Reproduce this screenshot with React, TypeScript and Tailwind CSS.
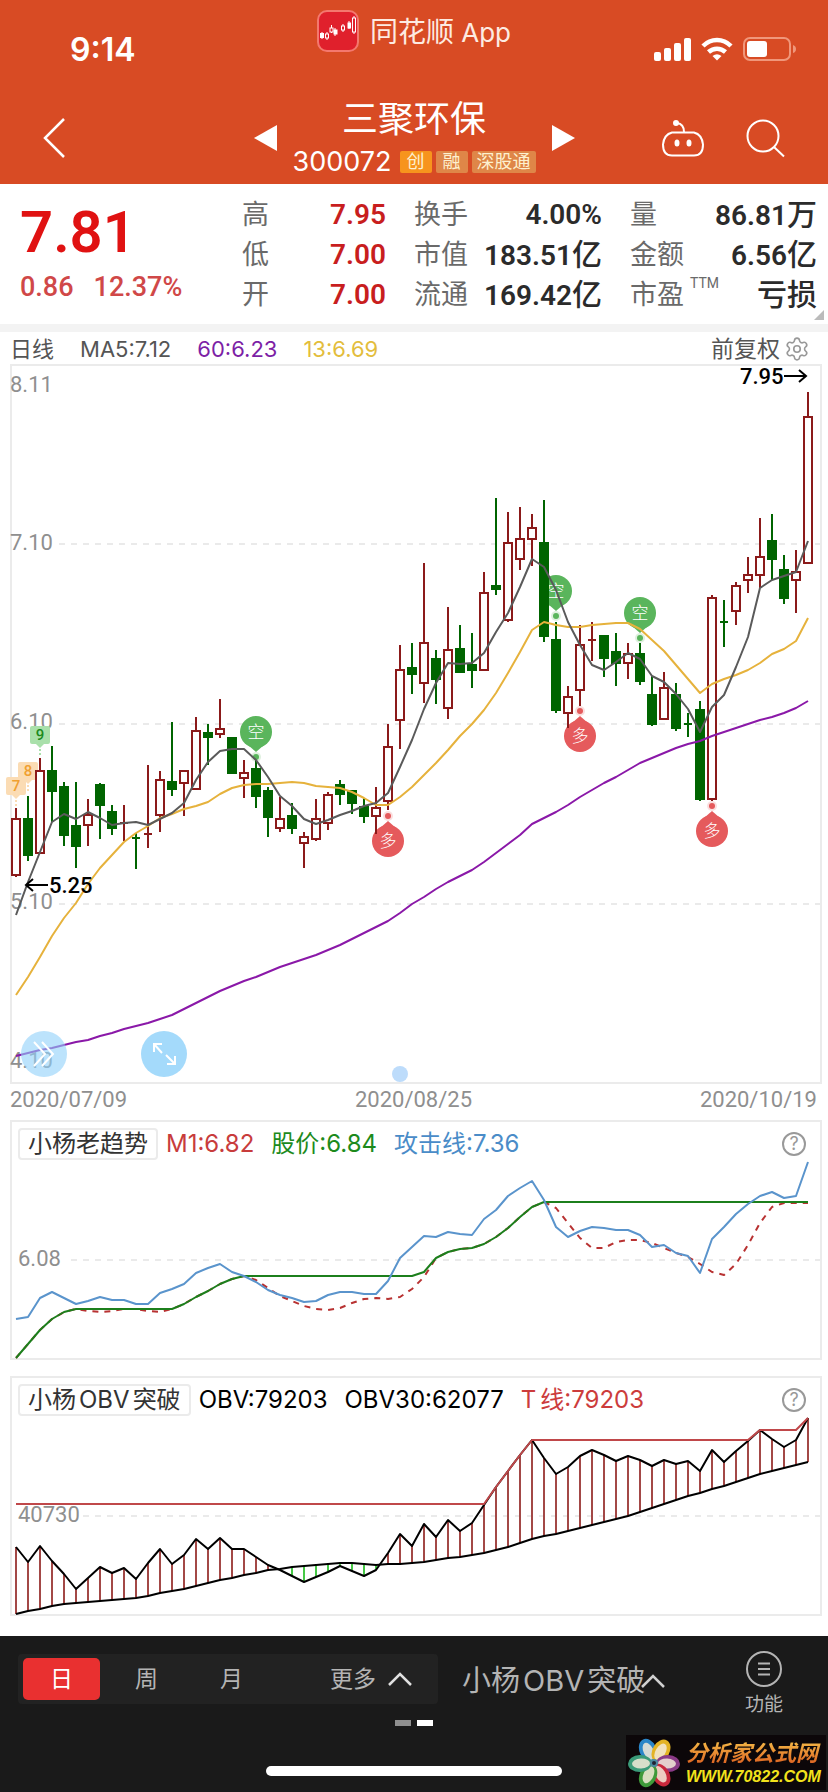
import React, { useState } from 'react';
import { Settings } from 'lucide-react';

const UI_FONT = "font-[family-name:Inter,'Noto_Sans_CJK_SC',sans-serif]";
const NUM_FONT = "font-[family-name:Roboto,'Noto_Sans_CJK_SC',sans-serif]";

// [up ? 1 : 0, bodyTop, bodyBottom, high, low]
const candles = [
    [1, 819, 875, 808, 877], [0, 818, 856, 796, 861], [1, 771, 853, 758, 854], [0, 770, 792, 746, 822],
    [0, 786, 836, 782, 846], [0, 825, 847, 782, 868], [1, 815, 825, 799, 846], [0, 784, 806, 783, 839],
    [0, 811, 829, 805, 835], [1, 823, 823, 805, 841], [0, 838, 838, 833, 869], [1, 834, 834, 765, 848],
    [1, 780, 815, 771, 832], [0, 781, 790, 722, 796], [1, 771, 783, 770, 816], [1, 731, 789, 717, 790],
    [0, 732, 738, 724, 765], [1, 729, 734, 699, 738], [0, 737, 774, 737, 774], [1, 773, 778, 760, 798],
    [0, 768, 797, 760, 808], [0, 790, 818, 787, 837], [1, 819, 828, 797, 832], [0, 815, 829, 803, 834],
    [1, 837, 843, 832, 868], [1, 819, 839, 799, 841], [1, 795, 823, 792, 830], [0, 784, 795, 780, 805],
    [0, 790, 804, 790, 814], [0, 806, 817, 798, 823], [1, 808, 816, 787, 834], [1, 747, 801, 724, 810],
    [1, 670, 720, 645, 749], [0, 667, 675, 643, 694], [1, 643, 683, 563, 703], [0, 658, 680, 650, 704],
    [1, 650, 708, 607, 719], [0, 648, 673, 625, 673], [0, 664, 671, 633, 688], [1, 593, 670, 572, 671],
    [0, 585, 590, 498, 595], [1, 543, 620, 512, 622], [1, 539, 559, 507, 570], [1, 528, 539, 514, 566],
    [0, 542, 637, 500, 642], [0, 639, 711, 622, 713], [1, 697, 713, 686, 728], [1, 645, 690, 625, 706],
    [1, 640, 640, 622, 661], [0, 635, 659, 635, 677], [0, 651, 664, 633, 686], [1, 654, 663, 643, 679],
    [0, 653, 682, 643, 685], [0, 694, 725, 676, 726], [1, 688, 719, 672, 719], [0, 694, 729, 683, 731],
    [0, 724, 724, 713, 737], [0, 709, 800, 701, 801], [1, 598, 799, 595, 801], [0, 622, 622, 600, 647],
    [1, 586, 611, 582, 625], [1, 575, 580, 557, 593], [1, 557, 575, 518, 588], [0, 540, 560, 514, 580],
    [0, 569, 599, 555, 604], [1, 572, 580, 550, 613], [1, 417, 563, 392, 563],
];

const ma5 = [
    915, 882, 852, 822, 814, 819, 812, 818, 825, 823, 822, 825, 819, 813, 803, 780, 762, 751, 749, 749, 760, 777,
    796, 806, 819, 824, 820, 815, 811, 806, 803, 793, 767, 740, 709, 683, 663, 664, 663, 653, 632, 613, 587, 559,
    567, 590, 622, 645, 665, 670, 662, 653, 659, 676, 682, 694, 709, 732, 707, 695, 667, 637, 588, 580, 576, 572, 541,
];

const ma13 = [
    995, 977, 957, 936, 918, 903, 884, 868, 855, 842, 833, 826, 818, 814, 809, 806, 802, 794, 788, 785, 784, 784,
    783, 782, 783, 786, 787, 788, 792, 798, 805, 805, 797, 787, 775, 763, 750, 736, 724, 710, 693, 673, 652, 630,
    622, 625, 627, 627, 625, 624, 623, 623, 629, 640, 651, 665, 679, 693, 684, 679, 675, 670, 663, 654, 649, 641, 618,
];

const ma60 = [
    1056, 1053, 1050, 1048, 1045, 1042, 1040, 1036, 1033, 1029, 1026, 1023, 1019, 1015, 1009, 1003, 997, 991, 986,
    981, 977, 972, 967, 963, 959, 955, 950, 945, 939, 933, 927, 921, 913, 904, 897, 889, 882, 876, 870, 862, 853,
    844, 835, 824, 818, 812, 805, 797, 790, 783, 777, 770, 763, 758, 753, 748, 744, 741, 736, 732, 728, 724, 720,
    717, 713, 708, 701,
];

const attack = [
    1319, 1317, 1298, 1292, 1298, 1304, 1301, 1297, 1300, 1300, 1304, 1304, 1293, 1289, 1284, 1273, 1268, 1264,
    1272, 1276, 1282, 1290, 1295, 1298, 1302, 1301, 1295, 1292, 1292, 1294, 1294, 1281, 1258, 1247, 1236, 1237,
    1232, 1234, 1235, 1219, 1210, 1196, 1188, 1181, 1200, 1227, 1237, 1231, 1227, 1228, 1230, 1230, 1235, 1247,
    1245, 1253, 1256, 1273, 1239, 1227, 1214, 1204, 1196, 1192, 1198, 1196, 1162,
];

const price = [
    1358, 1344, 1330, 1319, 1312, 1309, 1309, 1309, 1309, 1309, 1309, 1309, 1309, 1309, 1304, 1297, 1291, 1284,
    1279, 1276, 1276, 1276, 1276, 1276, 1276, 1276, 1276, 1276, 1276, 1276, 1276, 1276, 1276, 1276, 1272, 1258,
    1252, 1249, 1248, 1244, 1237, 1228, 1217, 1207, 1202, 1202, 1202, 1202, 1202, 1202, 1202, 1202, 1202, 1202,
    1202, 1202, 1202, 1202, 1202, 1202, 1202, 1202, 1202, 1202, 1202, 1202, 1202,
];

const m1 = [
    1358, 1344, 1330, 1319, 1312, 1309, 1311, 1312, 1311, 1309, 1309, 1311, 1312, 1309, 1304, 1297, 1291, 1284,
    1279, 1276, 1280, 1288, 1296, 1301, 1306, 1309, 1310, 1308, 1303, 1299, 1298, 1299, 1297, 1289, 1277, 1258,
    1252, 1249, 1248, 1244, 1237, 1228, 1217, 1207, 1202, 1208, 1223, 1238, 1248, 1248, 1242, 1240, 1240, 1243,
    1248, 1253, 1257, 1264, 1272, 1275, 1264, 1245, 1223, 1207, 1203, 1203, 1203,
];

const obv = [
    1547, 1562, 1546, 1561, 1574, 1589, 1578, 1567, 1573, 1568, 1579, 1563, 1549, 1564, 1555, 1539, 1549, 1538,
    1549, 1549, 1557, 1565, 1570, 1576, 1582, 1577, 1572, 1566, 1571, 1576, 1570, 1553, 1534, 1546, 1524, 1537,
    1520, 1531, 1523, 1505, 1487, 1471, 1455, 1440, 1458, 1474, 1467, 1456, 1450, 1455, 1461, 1456, 1460, 1466,
    1460, 1464, 1461, 1471, 1450, 1462, 1451, 1441, 1430, 1439, 1447, 1440, 1418,
];

const obv30 = [
    1614, 1611, 1609, 1606, 1604, 1603, 1602, 1601, 1600, 1599, 1598, 1596, 1593, 1591, 1589, 1586, 1583, 1580,
    1578, 1575, 1573, 1570, 1569, 1567, 1566, 1565, 1564, 1563, 1563, 1564, 1565, 1564, 1564, 1563, 1562, 1560,
    1558, 1557, 1555, 1553, 1550, 1547, 1543, 1539, 1536, 1534, 1531, 1528, 1525, 1522, 1519, 1516, 1512, 1508,
    1504, 1500, 1496, 1493, 1489, 1486, 1482, 1478, 1474, 1471, 1468, 1465, 1462,
];

const tLine = '16,1504 484,1504 496,1487 508,1471 520,1455 532,1440 748,1440 760,1430 796,1430 808,1418';

const xAt = (i: number) => 16 + 12 * i;
const toPoints = (ys: number[]) => ys.map((y, i) => `${xAt(i)},${y}`).join(' ');

const Line = ({ points, color, width = 2, dash }: { points: string; color: string; width?: number; dash?: string }) => (
    <polyline points={points} fill="none" stroke={color} strokeWidth={width} strokeDasharray={dash} strokeLinejoin="round" />
);

const GridLine = ({ y, x1 = 59 }: { y: number; x1?: number }) => (
    <line x1={x1} x2={820} y1={y} y2={y} stroke="#e4e4e4" strokeWidth={1.5} strokeDasharray="6 6" />
);

const Candle = ({ data, x }: { data: number[]; x: number }) => {
    const [up, top, bottom, high, low] = data;
    const color = up ? '#8b1a1a' : '#006400';
    if (top === bottom) {
        return <path d={`M${x} ${high}V${low}M${x - 4} ${top}h8`} stroke={color} strokeWidth={2} />;
    }
    return (
        <g stroke={color} strokeWidth={2}>
            <path d={`M${x} ${high}V${top}M${x} ${bottom}V${low}`} />
            {up ? (
                <rect x={x - 4} y={top} width={8} height={bottom - top} fill="#fff" />
            ) : (
                <rect x={x - 4} y={top + 1} width={8} height={Math.max(bottom - top - 2, 1)} fill={color} />
            )}
        </g>
    );
};

// Signal pin: "空" hangs above the price, "多" sits below it
const Pin = ({ x, y, type }: { x: number; y: number; type: 'short' | 'long' }) => {
    const short = type === 'short';
    const color = short ? '#5ab55c' : '#e55a5c';
    const s = short ? 1 : -1;
    return (
        <g>
            <circle cx={x} cy={y} r={16} fill={color} />
            <path d={`M${x - 8} ${y + s * 13}L${x} ${y + s * 20}L${x + 8} ${y + s * 13}Z`} fill={color} />
            <circle cx={x} cy={y + s * 25} r={5} fill={color} opacity={0.2} />
            <circle cx={x} cy={y + s * 25} r={3} fill={color} />
            <text x={x} y={y + 6} textAnchor="middle" fontSize={17} fontWeight={300} fill="#fff">{short ? '空' : '多'}</text>
        </g>
    );
};

const Tag = ({ x, y, label, fill, color }: { x: number; y: number; label: string; fill: string; color: string }) => (
    <g>
        <rect x={x - 10} y={y - 9} width={20} height={18} rx={2} fill={fill} />
        <path d={`M${x - 4} ${y + 9}h8l-4 4z`} fill={fill} />
        <path d={`M${x} ${y + 14}v8`} stroke={fill} strokeWidth={2} strokeDasharray="2 2" />
        <text x={x} y={y + 5} textAnchor="middle" fontSize={15} fontWeight={500} fill={color}>{label}</text>
    </g>
);

const StatusBar = () => (
    <div className="grid h-20 grid-cols-[1fr_auto_1fr]">
        <div className="pt-[30px] pl-[70px] text-[32px] leading-10 font-semibold">9:14</div>
        <div className="flex items-start gap-[11px] pt-2.5">
            <svg className="size-[42px]" viewBox="0 0 42 42">
                <rect x="1" y="1" width="40" height="40" rx="9" fill="#e0202c" stroke="#f4786e" strokeWidth="2" />
                <g fill="#fff" stroke="#fff">
                    <path d="M5 22v7M18 18v8M32 11v8" />
                    <rect x="3.5" y="23.500" width="3" height="4" />
                    <rect x="17" y="20" width="3" height="4" />
                    <rect x="31" y="13" width="2.500" height="5" />
                </g>
                <g fill="none" stroke="#fff">
                    <path d="M10 22v8M14.500 15v8M26 14v8M37 6v18" />
                    <rect x="8.500" y="24" width="3" height="4" fill="#e0202c" />
                    <rect x="13" y="18" width="3" height="4" fill="#e0202c" />
                    <rect x="24.500" y="16" width="3" height="4" fill="#e0202c" />
                    <rect x="35.500" y="8" width="3" height="14" fill="#e0202c" />
                </g>
            </svg>
            <span className="pt-px text-[26px] leading-[42px] text-[#fdebe2]">
                <span className="text-[28px]">同花顺</span> App
            </span>
        </div>
        <div className="flex items-start justify-end gap-2.5 pt-[37px] pr-8">
            <svg className="h-6 w-[37px]" viewBox="0 0 37 24" fill="#fff">
                <rect x="0" y="15" width="7" height="9" rx="2" />
                <rect x="10" y="11" width="7" height="13" rx="2" />
                <rect x="20" y="6" width="7" height="18" rx="2" />
                <rect x="30" y="1" width="7" height="23" rx="2" />
            </svg>
            <svg className="h-6 w-8" viewBox="0 0 32 24" fill="none" stroke="#fff" strokeWidth="4.500">
                <path d="M2 9C10 1 22 1 30 9" />
                <path d="M7.500 15C12.500 10.500 19.500 10.500 24.500 15" />
                <path d="M16 23.500l-4.500-4.500q4.500-3.500 9 0z" fill="#fff" stroke="none" />
            </svg>
            <svg className="h-6 w-[53px]" viewBox="0 0 53 24">
                <rect x="1" y="1" width="46" height="22" rx="6" fill="none" stroke="#f0977b" strokeWidth="2" />
                <rect x="4" y="4" width="20" height="16" rx="3" fill="#fff" />
                <path d="M50 8q3 1 3 4t-3 4z" fill="#f0977b" />
            </svg>
        </div>
    </div>
);

const badges = [
    { label: '创', style: 'bg-[#f7941d]' },
    { label: '融', style: 'bg-[#df8648]' },
    { label: '深股通', style: 'bg-[#df8648]' },
];

const NavHeader = () => (
    <div className="grid h-[104px] grid-cols-[1fr_auto_1fr] items-center">
        <button aria-label="返回" className="ml-[42px] w-6 pt-3">
            <svg className="h-10 w-6" viewBox="0 0 24 40" fill="none" stroke="#fff" strokeWidth="2.500">
                <path d="M22 1L3 20L22 39" />
            </svg>
        </button>
        <div className="flex items-center gap-4">
            <button aria-label="上一只" className="pt-3">
                <svg className="h-[26px] w-[23px]" viewBox="0 0 23 26" fill="#fff"><path d="M23 0v26L0 13z" /></svg>
            </button>
            <div className="pt-2 text-center">
                <h1 className="text-4xl leading-10 font-normal">三聚环保</h1>
                <div className="mt-3 flex h-[22px] items-center gap-1 text-lg leading-[22px]">
                    <span className="mr-1 text-[27px]">300072</span>
                    {badges.map((b) => (
                        <span key={b.label} className={`min-w-8 rounded-xs px-[5px] text-[#fdf0cf] ${b.style}`}>{b.label}</span>
                    ))}
                </div>
            </div>
            <button aria-label="下一只" className="pt-3">
                <svg className="h-[26px] w-[23px]" viewBox="0 0 23 26" fill="#fff"><path d="M0 0v26L23 13z" /></svg>
            </button>
        </div>
        <div className="flex justify-end gap-[42px] pt-3 pr-[42px]">
            <button aria-label="智能助手">
                <svg className="h-10 w-[42px]" viewBox="0 0 42 40" fill="none" stroke="#fff" strokeWidth="2">
                    <path d="M10 14.500h22q8 2 9 12q0 11-9 11H10q-9 0-9-11q1-10 9-12z" />
                    <path d="M22 14q0-8-7-9" />
                    <circle cx="14" cy="5" r="2" fill="#fff" />
                    <ellipse cx="15" cy="25" rx="1.500" ry="2.500" fill="#fff" />
                    <ellipse cx="27" cy="25" rx="1.500" ry="2.500" fill="#fff" />
                </svg>
            </button>
            <button aria-label="搜索">
                <svg className="size-10" viewBox="0 0 40 40" fill="none" stroke="#fff" strokeWidth="2">
                    <circle cx="17" cy="18" r="15.500" />
                    <path d="M28 29L38 38.500" />
                </svg>
            </button>
        </div>
    </div>
);

const quoteColumns = [
    {
        value: 'text-[#c81e1e]',
        rows: [{ label: '高', num: '7.95' }, { label: '低', num: '7.00' }, { label: '开', num: '7.00' }],
    },
    {
        value: 'text-[#2b2b2b]',
        rows: [{ label: '换手', num: '4.00%' }, { label: '市值', num: '183.51', unit: '亿' }, { label: '流通', num: '169.42', unit: '亿' }],
    },
    {
        value: 'text-[#2b2b2b]',
        rows: [{ label: '量', num: '86.81', unit: '万' }, { label: '金额', num: '6.56', unit: '亿' }, { label: '市盈', sup: 'TTM', num: '', unit: '亏损' }],
    },
] as { value: string; rows: { label: string; sup?: string; num: string; unit?: string }[] }[];

const QuotePanel = () => (
    <section className={`relative grid h-[140px] grid-cols-[214px_144fr_188fr_187fr] gap-x-7 bg-white pt-[11px] pr-[11px] ${NUM_FONT}`}>
        <div className="pl-5">
            <div className="mt-2 text-[58px] leading-[58px] font-semibold text-[#e01212]">7.81</div>
            <div className="mt-2.5 flex gap-5 text-[27px] leading-8 font-medium whitespace-nowrap text-[#d04848]">
                <span>0.86</span>
                <span>12.37%</span>
            </div>
        </div>
        {quoteColumns.map((col, i) => (
            <dl key={i}>
                {col.rows.map((row) => (
                    <div key={row.label} className="flex h-10 items-center justify-between whitespace-nowrap">
                        <dt className="flex text-[27px] leading-10 text-[#6a6a6a]">
                            {row.label}
                            {row.sup && <sup className="top-0 ml-1.5 text-sm leading-4">{row.sup}</sup>}
                        </dt>
                        <dd className={`text-[28px] leading-10 font-semibold ${col.value}`}>
                            {row.num}
                            {row.unit && <span className="text-[30px] font-medium">{row.unit}</span>}
                        </dd>
                    </div>
                ))}
            </dl>
        ))}
        <svg className="absolute right-1 bottom-1 size-2.5" viewBox="0 0 10 10"><path d="M10 0v10H0z" fill="#bbb" /></svg>
    </section>
);

const axisLabels = [
    { text: '8.11', y: 392 },
    { text: '7.10', y: 550 },
    { text: '6.10', y: 729 },
    { text: '5.10', y: 909 },
    { text: '4.10', y: 1068 },
];

const KLineChart = () => (
    <section className="relative mr-1.5 ml-2.5 border-2 border-[#ebebeb]">
        <svg className={`block w-full overflow-visible ${NUM_FONT}`} viewBox="12 366 808 716">
            <GridLine y={544} />
            <GridLine y={724} />
            <GridLine y={904} />
            {axisLabels.map((l) => (
                <text key={l.text} x={10} y={l.y} fontSize={22} fill="#8f8f8f">{l.text}</text>
            ))}
            <Tag x={28} y={771} label="8" fill="#fbdcb4" color="#f0a030" />
            <Tag x={16} y={786} label="7" fill="#fbdcb4" color="#f0a030" />
            <Tag x={40} y={735} label="9" fill="#a9e0aa" color="#1c8a1c" />
            <Pin x={256} y={732} type="short" />
            <Pin x={556} y={591} type="short" />
            <Pin x={640} y={613} type="short" />
            <Pin x={388} y={841} type="long" />
            <Pin x={580} y={736} type="long" />
            <Pin x={712} y={831} type="long" />
            {candles.map((c, i) => (
                <Candle key={i} data={c} x={xAt(i)} />
            ))}
            <Line points={toPoints(ma60)} color="#8a18a8" />
            <Line points={toPoints(ma13)} color="#e6b23c" />
            <Line points={toPoints(ma5)} color="#5a5a5a" />
            <g fill="none" stroke="#000" strokeWidth={2}>
                <path d="M784 376h21M799 370l7 6l-7 6" />
                <path d="M48 885h-21M33 879l-7 6l7 6" />
            </g>
            <text x={740} y={384} fontSize={22} fontWeight={500}>7.95</text>
            <text x={49} y={893} fontSize={22} fontWeight={500}>5.25</text>
            <circle cx={400} cy={1074} r={8} fill="#bddcfb" />
        </svg>
        <button aria-label="快进" className="absolute bottom-[5px] left-[9px] size-[46px] rounded-full bg-[#8fd0fa]/60">
            <svg viewBox="0 0 46 46" fill="none" stroke="#fff" strokeWidth="2">
                <path d="M13 11l11 12l-11 12M21 11l11 12l-11 12" />
            </svg>
        </button>
        <button aria-label="全屏" className="absolute bottom-[5px] left-[129px] size-[46px] rounded-full bg-[#a4dafb]">
            <svg viewBox="0 0 46 46" fill="none" stroke="#fff" strokeWidth="2">
                <path d="M13 21v-8h8M13 13l8 9M34 25v8h-8M34 33l-9-9" />
            </svg>
        </button>
    </section>
);

interface Legend {
    text: React.ReactNode;
    style: string;
}

interface IndicatorPanelProps {
    title: React.ReactNode;
    legends: Legend[];
    viewBox: string;
    children: React.ReactNode;
}

const IndicatorPanel = ({ title, legends, viewBox, children }: IndicatorPanelProps) => (
    <section className="mr-1.5 ml-2.5 border-2 border-[#ebebeb]">
        <div className="flex h-[38px] items-center pt-1.5 pr-3.5 pl-[6px] whitespace-nowrap">
            <button className="mr-2 h-8 rounded-sm border-2 border-[#ebebeb] px-2 text-[24px] leading-7 text-[#333]">{title}</button>
            <div className="flex flex-1 gap-[17px] text-[24px] leading-8">
                {legends.map((l, i) => (
                    <span key={i} className={l.style}>{l.text}</span>
                ))}
            </div>
            <button aria-label="说明" className="size-6 rounded-full border-2 border-[#999] text-lg leading-5 text-[#999]">?</button>
        </div>
        <svg className={`block w-full overflow-visible ${NUM_FONT}`} viewBox={viewBox}>{children}</svg>
    </section>
);

const ObvTitle = () => (
    <>小杨<span className="mx-[3px]">OBV</span>突破</>
);

const periods = ['日', '周', '月'];

const BottomBar = () => {
    const [period, setPeriod] = useState('日');

    return (
        <footer className="relative mt-5 h-[156px] bg-[#1a1a1a] pt-[18px] text-[#b4b4b4]">
            <div className="flex h-[50px] items-center pl-[18px]">
                <div className="flex h-[50px] w-[420px] items-center rounded-sm bg-[#222] pl-[5px] text-[23px]">
                    {periods.map((p) => (
                        <button
                            key={p}
                            onClick={() => setPeriod(p)}
                            className={`mr-2 h-[42px] w-[77px] rounded-[5px] ${p === period ? 'bg-[#e93030] text-white' : ''}`}
                        >
                            {p}
                        </button>
                    ))}
                    <button className="ml-auto flex items-center gap-3 pr-[26px]">
                        更多
                        <svg className="h-3.5 w-6" viewBox="0 0 24 14" fill="none" stroke="#e0e0e0" strokeWidth="2.500"><path d="M1 13L12 2L23 13" /></svg>
                    </button>
                </div>
                <button className="ml-6 flex items-center pt-1 text-[29px] whitespace-nowrap">
                    <span><ObvTitle /></span>
                    <svg className="-ml-1 h-3.5 w-6" viewBox="0 0 24 14" fill="none" stroke="#d0d0d0" strokeWidth="2.500"><path d="M1 13L12 2L23 13" /></svg>
                </button>
                <button className="mr-[45px] ml-auto flex flex-col items-center gap-1 pt-3 text-[19px]">
                    <svg className="size-9" viewBox="0 0 36 36" fill="none" stroke="#b4b4b4" strokeWidth="2">
                        <circle cx="18" cy="18" r="17" />
                        <path d="M12 12.500h12M12 18h12M12 23.500h12" />
                    </svg>
                    功能
                </button>
            </div>
            <div className="mt-4 flex justify-center gap-1.5">
                <span className="h-1.5 w-4 bg-[#8f8f8f]" />
                <span className="h-1.5 w-4 bg-white" />
            </div>
            <div className="mx-auto mt-10 h-2.5 w-[296px] rounded-full bg-white" />
            <Watermark />
        </footer>
    );
};

const petals = [
    { angle: -25, color: '#2a86c8' },
    { angle: 30, color: '#e3b324' },
    { angle: 92, color: '#8a3a86' },
    { angle: 150, color: '#c8283c' },
    { angle: 205, color: '#3f9a3a' },
    { angle: 268, color: '#3a9a78' },
];

const Watermark = () => (
    <a href="#" className="absolute right-0.5 bottom-0.5 flex h-[55px] w-[200px] items-center gap-1.5 bg-[#0c0709] pl-0.5">
        <svg className="h-[52px] w-[52px] shrink-0" viewBox="0 0 52 52">
            {petals.map((p) => (
                <g key={p.angle} transform={`rotate(${p.angle} 26 26)`}>
                    <ellipse cx="26" cy="12" rx="8.500" ry="12" fill={p.color} />
                    <ellipse cx="26" cy="13" rx="5" ry="9" fill="#f3ead8" opacity="0.85" />
                </g>
            ))}
            <circle cx="26" cy="26" r="4" fill="#4a8aa0" />
            <circle cx="26" cy="26" r="2" fill="#223" />
        </svg>
        <span className="flex flex-col whitespace-nowrap italic">
            <span className="bg-linear-to-b from-[#f5c04a] to-[#d8561c] bg-clip-text text-[22px] leading-7 font-bold text-transparent">分析家公式网</span>
            <span className="font-[family-name:'Liberation_Sans',sans-serif] text-base leading-5 font-bold text-[#f2e21c]">WWW.70822.COM</span>
        </span>
    </a>
);

export default function App() {
    return (
        <div className={`w-full overflow-hidden bg-white text-black ${UI_FONT}`}>
            <header className="bg-[#d84b24] text-white">
                <StatusBar />
                <NavHeader />
            </header>

            <QuotePanel />
            <div className="h-2 bg-[#f3f3f3]" />

            <div className="flex h-8 items-center pt-0.5 pr-[18px] pl-2.5 text-[22px] leading-8">
                <span className="text-[#555]">日线</span>
                <span className="ml-[26px] text-[#555]">MA5:7.12</span>
                <span className="ml-[26px] text-[#7d1fa6]">60:6.23</span>
                <span className="ml-[26px] text-[#e3bd3c]">13:6.69</span>
                <button className="ml-auto flex items-center gap-1 text-[23px] text-[#555]">
                    前复权
                    <Settings size={26} strokeWidth={1.5} color="#999" />
                </button>
            </div>

            <KLineChart />
            <div className={`flex h-9 justify-between pr-[11px] pl-2.5 text-[22px] leading-8 text-[#8f8f8f] ${NUM_FONT}`}>
                <span>2020/07/09</span>
                <span>2020/08/25</span>
                <span>2020/10/19</span>
            </div>

            <IndicatorPanel
                title="小杨老趋势"
                legends={[
                    { text: 'M1:6.82', style: 'text-[#c83c3c]' },
                    { text: '股价:6.84', style: 'text-[#1c8a1c]' },
                    { text: '攻击线:7.36', style: 'text-[#4a8cc8]' },
                ]}
                viewBox="12 1160 808 198"
            >
                <GridLine y={1260} x1={71} />
                <text x={18} y={1266} fontSize={22} fill="#8f8f8f">6.08</text>
                <Line points={toPoints(m1)} color="#b83232" dash="6 6" />
                <Line points={toPoints(price)} color="#1c7f1c" />
                <Line points={toPoints(attack)} color="#5a94cc" />
            </IndicatorPanel>

            <div className="h-4" />

            <IndicatorPanel
                title={<ObvTitle />}
                legends={[
                    { text: 'OBV:79203', style: 'text-black' },
                    { text: 'OBV30:62077', style: 'text-black' },
                    { text: <><span className="mr-1">T</span>线:79203</>, style: 'text-[#cc3c3c]' },
                ]}
                viewBox="12 1416 808 198"
            >
                <GridLine y={1516} x1={83} />
                <text x={18} y={1522} fontSize={22} fill="#8f8f8f">40730</text>
                {obv.map((y, i) => (
                    <line key={i} x1={xAt(i)} x2={xAt(i)} y1={y} y2={obv30[i]} stroke={y < obv30[i] ? '#a34846' : '#46c846'} strokeWidth={2} />
                ))}
                <Line points={toPoints(obv)} color="#000" />
                <Line points={toPoints(obv30)} color="#000" />
                <Line points={tLine} color="#c0484a" />
            </IndicatorPanel>

            <BottomBar />
        </div>
    );
}
